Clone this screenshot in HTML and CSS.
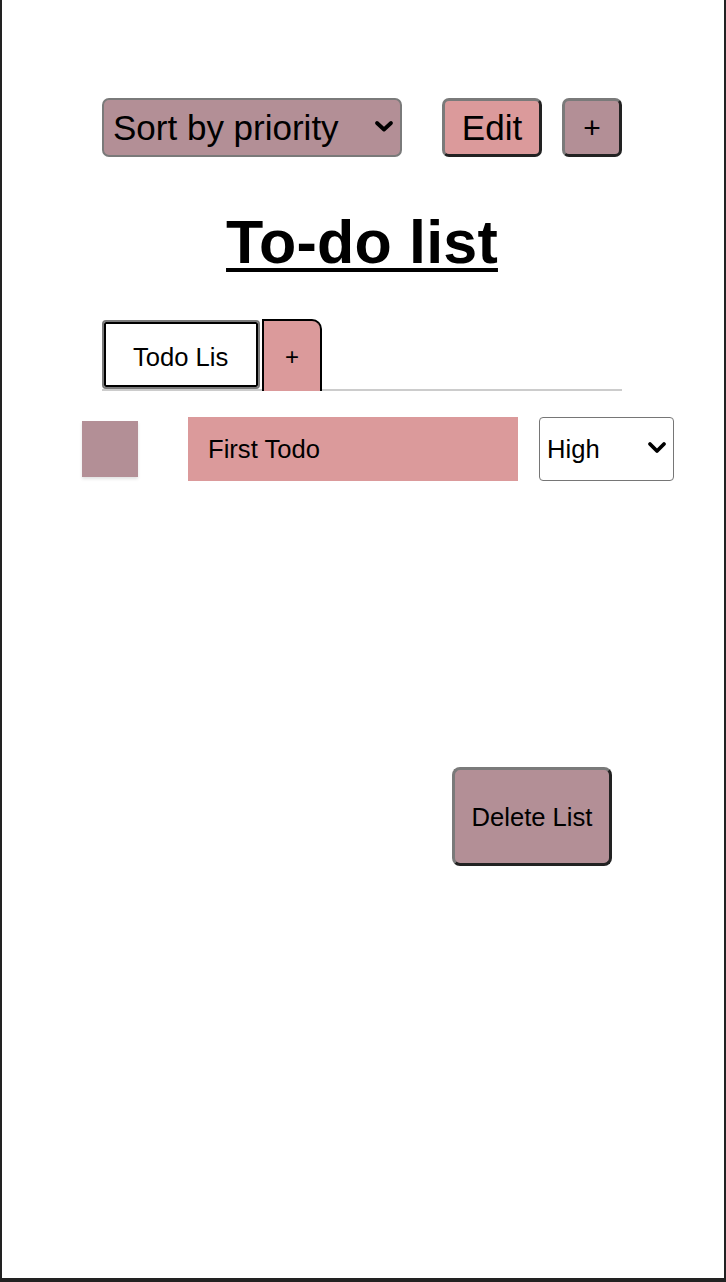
FILE: index.html
```html
<!DOCTYPE html>
<html lang="en">
<head>
<meta charset="utf-8">
<title>To-do list</title>
<link rel="stylesheet" href="styles.css">
</head>
<body>
<div class="frame">
  <div class="column">
    <div class="toolbar">
      <span class="select-wrap sort-wrap">
        <select class="sort-select"><option>Sort by priority</option></select>
        <svg class="chevron sort-chevron" width="20" height="13" viewBox="0 0 20 13"><path d="M3 3 L10 9.5 L17 3" fill="none" stroke="#000" stroke-width="3.8" stroke-linecap="round" stroke-linejoin="round"/></svg>
      </span>
      <button class="btn btn-edit">Edit</button>
      <button class="btn btn-add">+</button>
    </div>
    <h1 class="title">To-do list</h1>
    <div class="tabs">
      <button class="tab tab-active"><span class="tab-label">Todo Lis</span></button>
      <button class="tab tab-new">+</button>
    </div>
    <div class="todo-row">
      <span class="check"></span>
      <span class="todo-text">First Todo</span>
      <span class="select-wrap prio-wrap">
        <select class="prio-select"><option>High</option></select>
        <svg class="chevron prio-chevron" width="20" height="14" viewBox="0 0 20 14"><path d="M3 3 L10 10 L17 3" fill="none" stroke="#000" stroke-width="3.8" stroke-linecap="round" stroke-linejoin="round"/></svg>
      </span>
    </div>
    <div class="footer">
      <button class="btn btn-delete">Delete List</button>
    </div>
  </div>
</div>
</body>
</html>
```

FILE: styles.css
```css
html, body {
  margin: 0;
  padding: 0;
  background: #fff;
}
body {
  font-family: "Liberation Sans", Arial, sans-serif;
  color: #000;
}
.frame {
  box-sizing: border-box;
  width: 726px;
  height: 1282px;
  border-left: 2px solid #222;
  border-right: 2px solid #222;
  border-bottom: 4px solid #222;
  padding-top: 98px;
  padding-left: 100px;
}
.column {
  width: 520px;
}
.toolbar {
  display: flex;
  align-items: center;
  height: 59px;
}
.select-wrap {
  position: relative;
  display: inline-flex;
}
.chevron {
  position: absolute;
  pointer-events: none;
}
.sort-select {
  appearance: none;
  -webkit-appearance: none;
  box-sizing: border-box;
  width: 300px;
  height: 59px;
  margin: 0;
  padding: 0 0 0 9px;
  border: 2px solid #7a7a7a;
  border-radius: 7px;
  background: #b38f96;
  font-family: "Liberation Sans", Arial, sans-serif;
  font-size: 35px;
  color: #000;
}
.sort-chevron {
  right: 8px;
  top: 22px;
}
.btn {
  box-sizing: border-box;
  margin: 0;
  padding: 0;
  font-family: "Liberation Sans", Arial, sans-serif;
  color: #000;
  border-style: solid;
  border-color: #7a7a7a #222 #222 #7a7a7a;
}
.btn-edit {
  margin-left: 40px;
  width: 100px;
  height: 59px;
  border-width: 3px;
  border-radius: 7px;
  background: #db9a9b;
  font-size: 35px;
}
.btn-add {
  margin-left: 20px;
  width: 60px;
  height: 59px;
  border-width: 3px;
  border-radius: 7px;
  background: #b38f96;
  font-size: 30px;
}
.title {
  margin: 51px 0 0;
  font-size: 61px;
  line-height: 68px;
  font-weight: 700;
  text-align: center;
  letter-spacing: 0.2px;
  text-decoration: underline;
  text-decoration-thickness: 4px;
  text-underline-offset: 5px;
}
.tabs {
  margin-top: 44px;
  display: flex;
  align-items: flex-end;
  gap: 2px;
  height: 69px;
  border-bottom: 2px solid #ccc;
}
.tab {
  box-sizing: border-box;
  margin: 0;
  padding: 0;
  font-family: "Liberation Sans", Arial, sans-serif;
  font-size: 25.6px;
  color: #000;
}
.tab-active {
  width: 158px;
  height: 69px;
  border: 2px solid #7a7a7a;
  border-radius: 4px;
  background: #fff;
  box-shadow: inset 0 0 0 2px #000;
  display: flex;
  align-items: center;
  padding-left: 29px;
  padding-top: 5px;
}
.tab-label {
  display: block;
  white-space: nowrap;
  text-align: left;
}
.tab-new {
  width: 60px;
  height: 72px;
  margin-bottom: -2px;
  border: 2px solid #000;
  border-bottom: none;
  border-radius: 0 10px 0 0;
  background: #db9a9b;
  font-size: 24px;
  padding-top: 2px;
}
.todo-row {
  margin-top: 26px;
  margin-left: -20px;
  width: 592px;
  height: 64px;
  display: flex;
  align-items: center;
}
.check {
  display: block;
  width: 56px;
  height: 56px;
  background: #b38f96;
  box-shadow: 0 2px 3px rgba(0, 0, 0, 0.12);
}
.todo-text {
  box-sizing: border-box;
  display: flex;
  align-items: center;
  margin-left: 50px;
  width: 330px;
  height: 64px;
  padding-left: 20px;
  background: #db9a9b;
  font-size: 25.6px;
}
.prio-wrap {
  margin-left: 21px;
}
.prio-select {
  appearance: none;
  -webkit-appearance: none;
  box-sizing: border-box;
  width: 135px;
  height: 64px;
  margin: 0;
  padding: 0 0 0 7px;
  border: 1px solid #767676;
  border-radius: 4px;
  background: #fff;
  font-family: "Liberation Sans", Arial, sans-serif;
  font-size: 25.6px;
  color: #000;
}
.prio-chevron {
  right: 7px;
  top: 24px;
}
.footer {
  margin-top: 286px;
  display: flex;
  justify-content: flex-end;
  padding-right: 10px;
}
.btn-delete {
  width: 160px;
  height: 99px;
  border-width: 3px;
  border-radius: 8px;
  background: #b38f96;
  font-size: 25.6px;
  padding-top: 2px;
}
```
